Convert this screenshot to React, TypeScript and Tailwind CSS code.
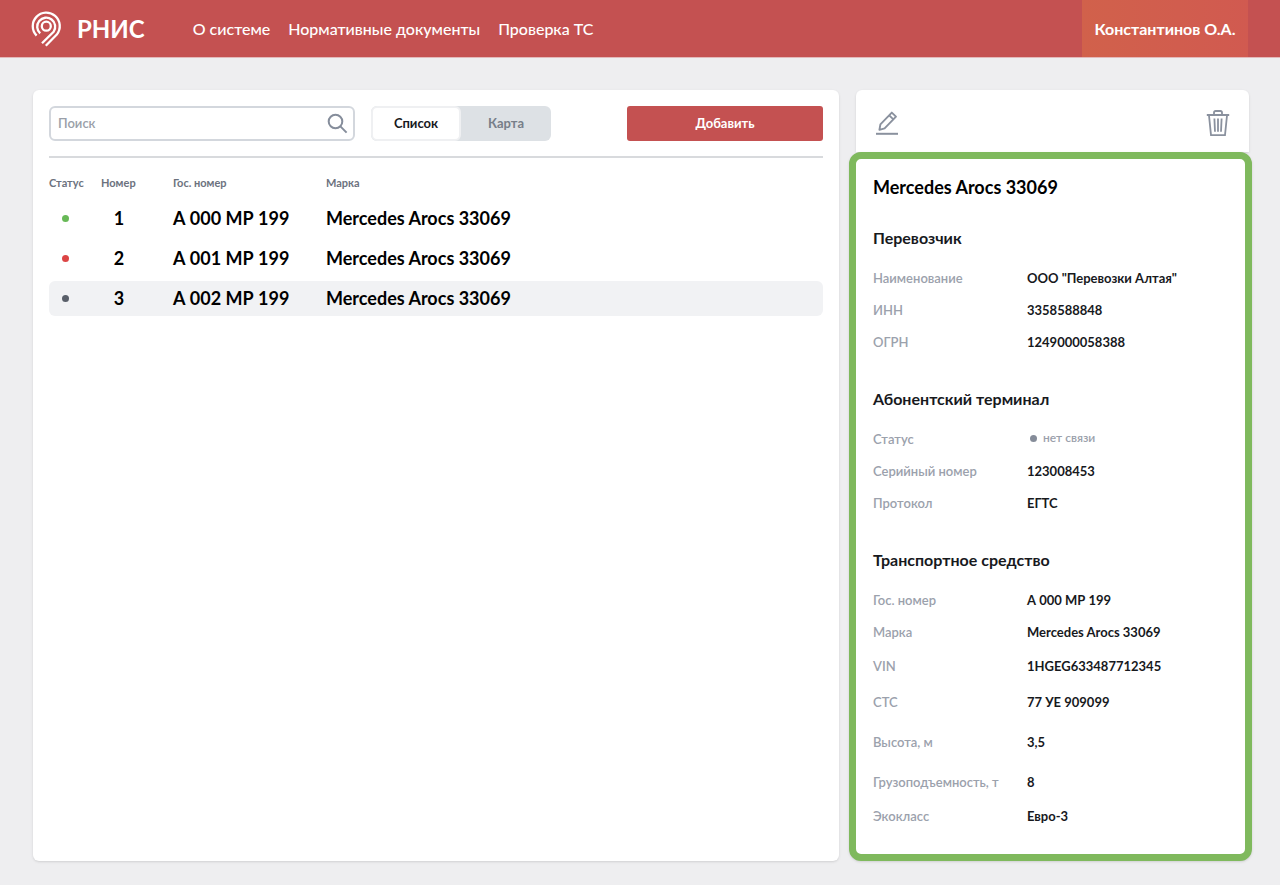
import React from 'react';

type Row = { label: string; value: React.ReactNode; height: string };

const vehicles = [
  { id: 1, plate: 'А 000 МР 199', model: 'Mercedes Arocs 33069', dot: 'bg-[#68b957]', selected: false },
  { id: 2, plate: 'А 001 МР 199', model: 'Mercedes Arocs 33069', dot: 'bg-[#dc4545]', selected: false },
  { id: 3, plate: 'А 002 МР 199', model: 'Mercedes Arocs 33069', dot: 'bg-[#595f69]', selected: true },
];

const sections: { title: string; rows: Row[] }[] = [
  {
    title: 'Перевозчик',
    rows: [
      { label: 'Наименование', value: 'ООО "Перевозки Алтая"', height: 'h-8' },
      { label: 'ИНН', value: '3358588848', height: 'h-8' },
      { label: 'ОГРН', value: '1249000058388', height: 'h-8' },
    ],
  },
  {
    title: 'Абонентский терминал',
    rows: [
      { label: 'Статус', value: <NoSignal />, height: 'h-8' },
      { label: 'Серийный номер', value: '123008453', height: 'h-8' },
      { label: 'Протокол', value: 'ЕГТС', height: 'h-8' },
    ],
  },
  {
    title: 'Транспортное средство',
    rows: [
      { label: 'Гос. номер', value: 'А 000 МР 199', height: 'h-8' },
      { label: 'Марка', value: 'Mercedes Arocs 33069', height: 'h-8' },
      { label: 'VIN', value: '1HGEG633487712345', height: 'h-9' },
      { label: 'СТС', value: '77 УЕ 909099', height: 'h-9' },
      { label: 'Высота, м', value: '3,5', height: 'h-11' },
      { label: 'Грузоподъемность, т', value: '8', height: 'h-9' },
      { label: 'Экокласс', value: 'Евро-3', height: 'h-8' },
    ],
  },
];

function NoSignal() {
  return (
    <span className="flex items-center gap-[6px] pb-1 pl-[3px] text-[12px] font-semibold text-[#9ba1ac]">
      <span className="size-[7px] rounded-full bg-[#858c99]" />
      нет связи
    </span>
  );
}

function Logo() {
  return (
    <svg width="31" height="36" viewBox="0 0 31 36" fill="none" stroke="#fff" strokeWidth="2.3" aria-hidden="true">
      <circle cx="15.3" cy="15.2" r="4.5" />
      <path d="M9.2 22.4A9 9 0 1 1 22.6 20.8L11 32.2" />
      <path d="M5.6 24.6A13.5 13.5 0 1 1 25.8 23.6L14.8 34.8" />
    </svg>
  );
}

function Header() {
  return (
    <header className="flex h-[58px] items-stretch border-b border-[#e3b9ba] bg-[#c45151] pr-8 pl-[31px] text-white">
      <a href="#" className="flex items-center gap-[15px] text-[24px] font-bold">
        <Logo />
        РНИС
      </a>
      <nav className="ml-12 flex items-center gap-[18px] text-[16px] font-medium">
        <a href="#about">О системе</a>
        <a href="#docs">Нормативные документы</a>
        <a href="#check">Проверка ТС</a>
      </nav>
      <button className="ml-auto w-[166px] bg-linear-to-r from-[#d1614b] to-[#d15a50] text-[16px] font-bold">
        Константинов О.А.
      </button>
    </header>
  );
}

function VehicleList() {
  return (
    <main className="min-w-0 flex-1 rounded-md bg-white p-4 shadow-sm">
      <div className="flex items-center gap-4">
        <label className="flex h-[35px] w-[306px] items-center rounded-md border-2 border-[#d3d7dd] pr-[5px] pl-[7px]">
          <input
            type="search"
            aria-label="Поиск"
            placeholder="Поиск"
            className="min-w-0 flex-1 text-[13px] font-semibold outline-none placeholder:text-[#9a9fa9]"
          />
          <svg width="21" height="21" viewBox="0 0 21 21" fill="none" stroke="#858d9b" strokeWidth="2" aria-hidden="true">
            <circle cx="8.5" cy="8.5" r="6.8" />
            <path d="M13.4 13.4L19.6 19.6" />
          </svg>
        </label>
        <div className="flex h-[35px] w-[180px] rounded-md bg-[#dde1e5] text-[13px] font-bold">
          <button className="w-1/2 rounded-md border-2 border-[#eff0f2] bg-white text-[#17191d]">Список</button>
          <button className="w-1/2 text-[#777e89]">Карта</button>
        </div>
        <button className="ml-auto h-[35px] w-[196px] rounded-[3px] bg-[#c45151] text-[13px] font-bold text-white">
          Добавить
        </button>
      </div>

      <hr className="mt-[15px] border-t-2 border-[#d8dadd]" />

      <table className="mt-[7px] w-full table-fixed border-separate border-spacing-x-0 border-spacing-y-[5px] text-left">
        <thead>
          <tr className="h-[26px] text-[11px] text-[#6c727e]">
            <th className="w-[52px] font-bold">Статус</th>
            <th className="w-[72px] font-bold">Номер</th>
            <th className="w-[153px] font-bold">Гос. номер</th>
            <th className="font-bold">Марка</th>
          </tr>
        </thead>
        <tbody>
          {vehicles.map((v) => (
            <tr key={v.id} className={v.selected ? 'h-[35px] bg-[#f1f2f4]' : 'h-[35px]'}>
              <td className="rounded-l-md pr-5">
                <span className={`mx-auto block size-[7px] rounded-full ${v.dot}`} />
              </td>
              <td className="pr-9 text-center text-[18px] font-bold">{v.id}</td>
              <td className="text-[18px] font-bold">{v.plate}</td>
              <td className="rounded-r-md text-[18px] font-bold">{v.model}</td>
            </tr>
          ))}
        </tbody>
      </table>
    </main>
  );
}

function Details() {
  return (
    <aside className="flex w-[393px] flex-col">
      <div className="flex h-[62px] items-center justify-between rounded-t-md bg-white px-[19px] pt-1 shadow-sm">
        <button aria-label="Редактировать">
          <svg width="24" height="26" viewBox="0 0 24 26" fill="none" stroke="#8a919e" strokeWidth="1.9" aria-hidden="true">
            <path d="M4.4 19.8L5.4 14.4L16.8 2.6L21 6.6L9.6 18.4Z" strokeLinejoin="round" />
            <path d="M14.2 5.4L18.4 9.4" />
            <path d="M1 23.8H23" strokeWidth="2" />
          </svg>
        </button>
        <button aria-label="Удалить">
          <svg width="24" height="28" viewBox="0 0 24 28" fill="none" stroke="#8a919e" strokeWidth="1.8" aria-hidden="true">
            <path d="M8 5.4V3.6Q8 2 9.6 2H14.4Q16 2 16 3.6V5.4" />
            <path d="M0.8 6H23.2" strokeWidth="2" />
            <path d="M3 6.5L5 26.2H19L21 6.5" />
            <path d="M8.4 9.5L9 22.8M12 9.5V22.8M15.6 9.5L15 22.8" />
          </svg>
        </button>
      </div>

      <div className="-mr-[3px] -ml-[7px] flex-1 rounded-xl border-7 border-[#7fb95d] bg-white px-[17px] pt-[17px] pb-5 shadow-sm">
        <h1 className="text-[18px] leading-[22px] font-bold">Mercedes Arocs 33069</h1>
        {sections.map((section) => (
          <section key={section.title} className="mt-7">
            <h2 className="mb-[13px] text-[16px] leading-6 font-bold text-[#17191d]">{section.title}</h2>
            <dl>
              {section.rows.map((row) => (
                <div key={row.label} className={`flex items-center text-[13px] ${row.height}`}>
                  <dt className="w-[154px] font-semibold text-[#9ba1ac]">{row.label}</dt>
                  <dd className="font-bold text-[#17191d]">{row.value}</dd>
                </div>
              ))}
            </dl>
          </section>
        ))}
      </div>
    </aside>
  );
}

export default function App() {
  return (
    <div className="flex min-h-screen flex-col bg-[#eeeef0] font-['Lato','Noto_Sans',sans-serif] text-black">
      <Header />
      <div className="flex flex-1 gap-[17px] pt-8 pr-[31px] pb-6 pl-[33px]">
        <VehicleList />
        <Details />
      </div>
    </div>
  );
}
